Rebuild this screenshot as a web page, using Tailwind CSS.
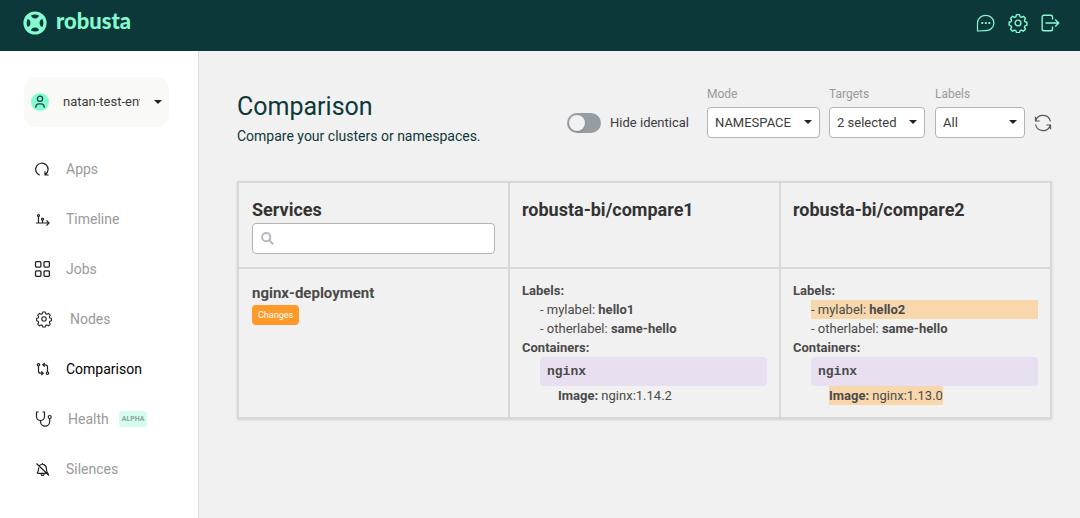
<!DOCTYPE html>
<html lang="en">
<head>
  <meta charset="UTF-8" />
  <meta name="viewport" content="width=device-width, initial-scale=1" />
  <title>Comparison - Robusta</title>
  <script src="https://cdn.jsdelivr.net/npm/@tailwindcss/browser@4"></script>
</head>
<body class="min-h-screen flex flex-col bg-[#f1f1f1] text-[#3b3b3b] font-['Roboto',sans-serif]">

  <header class="h-[51px] shrink-0 bg-[#0d3839] text-[#84fad0] pl-[23px] pr-5 pb-[5px] flex justify-between items-center">
    <a href="#" class="flex items-center gap-[9px]">
      <svg class="size-6" viewBox="0 0 24 24">
        <circle cx="12" cy="12" r="11.600" fill="currentColor" />
        <g fill="#0d3839">
          <path d="M8 4.600Q12 2.600 16 4.600Q15.300 7.400 12 7.400Q8.700 7.400 8 4.600z" />
          <path d="M8 19.400Q12 21.400 16 19.400Q15.300 16.600 12 16.600Q8.700 16.600 8 19.400z" />
          <path d="M4.600 8Q2.600 12 4.600 16Q7.400 15.300 7.400 12Q7.400 8.700 4.600 8z" />
          <path d="M19.400 8Q21.400 12 19.400 16Q16.600 15.300 16.600 12Q16.600 8.700 19.400 8z" />
        </g>
      </svg>
      <span class="font-['Lato',sans-serif] font-black text-[22px] leading-6 pb-1">robusta</span>
    </a>
    <div class="flex items-center gap-3">
      <button aria-label="Chat">
        <svg class="size-5" viewBox="0 0 20 20" fill="none" stroke="currentColor" stroke-width="1.200" stroke-linejoin="round">
          <path d="M1.500 18V10a8.200 7.700 0 1 1 8.200 7.700z" />
          <path d="M5.400 10h1.800M8.900 10h1.800M12.400 10h1.800" stroke-width="1.800" />
        </svg>
      </button>
      <button aria-label="Settings">
        <svg class="size-5" viewBox="0 0 20 20" fill="none" stroke="currentColor" stroke-width="1.400" stroke-linejoin="round">
          <path d="M8.500 1.600h3l.6 2.200 1.300.6 2-1.100 2.100 2.100-1.100 2 .6 1.300 1.900.5v3l-1.900.6-.6 1.300 1.100 2-2.100 2.100-2-1.100-1.300.5-.6 2h-3l-.6-2-1.300-.5-2 1.100-2.100-2.100 1.100-2-.6-1.300-1.900-.6v-3l1.900-.5.6-1.300-1.100-2 2.100-2.100 2 1.100 1.300-.6z" />
          <circle cx="10" cy="10" r="2.900" />
        </svg>
      </button>
      <button aria-label="Log out">
        <svg class="size-5" viewBox="0 0 20 20" fill="none" stroke="currentColor" stroke-width="1.400">
          <path d="M12.500 6.500V4q0-1.800-1.800-1.800H4Q2.200 2.200 2.200 4v12q0 1.800 1.800 1.800h6.700q1.800 0 1.800-1.800v-2.500M5.500 10H18.500M15.200 6.500L18.700 10l-3.500 3.500" />
        </svg>
      </button>
    </div>
  </header>

  <div class="flex grow">
    <aside class="w-[199px] shrink-0 bg-white border-r border-[#dcdcdc]">
      <button class="mt-[26px] ml-6 w-[145px] h-[50px] px-[7px] bg-[#f9faf5] rounded-xl flex items-center text-[13px]">
        <svg class="size-[18px] shrink-0" viewBox="0 0 18 18" fill="none" stroke="#1c4a45" stroke-width="1.300">
          <circle cx="9" cy="9" r="9" fill="#84fad0" stroke="none" />
          <circle cx="9" cy="5.800" r="2.600" />
          <path d="M4.800 14.800v-1a3.200 3.200 0 0 1 3.200-3h2a3.200 3.200 0 0 1 3.200 3v1" />
        </svg>
        <span class="ml-[14px] w-[77px] overflow-hidden whitespace-nowrap text-left">natan-test-env</span>
        <svg class="ml-[14px] w-2 h-1 shrink-0" viewBox="0 0 8 4" fill="#222"><path d="M0 0h8L4 4z" /></svg>
      </button>

      <nav class="mt-[17px] pl-[34px] text-[14px] text-[#9a9a9a]">
        <a href="#" class="h-[50px] flex items-center gap-4">
          <svg class="size-4" viewBox="0 0 16 16" fill="none" stroke="#222" stroke-width="1.200">
            <path d="M5.800 14.200A6.200 6.200 0 1 1 11.500 13.400M11 10.300v3.700h3.700" />
          </svg>
          Apps
        </a>
        <a href="#" class="h-[50px] flex items-center gap-4">
          <svg class="size-4" viewBox="0 0 16 16" fill="none" stroke="#222" stroke-width="1.200">
            <path d="M2 12h13M12.500 9.300L15 12l-2.500 2.700M4.500 12V5.500M8.500 12V9" />
            <circle cx="4.500" cy="4.500" r="1" />
            <circle cx="8.500" cy="8" r="1" />
          </svg>
          Timeline
        </a>
        <a href="#" class="h-[50px] flex items-center gap-4">
          <svg class="size-4" viewBox="0 0 16 16" fill="none" stroke="#222" stroke-width="1.300">
            <rect x="1.500" y=".7" width="5.400" height="5.400" rx="1" />
            <rect x="10" y=".7" width="5.400" height="5.400" rx="1" />
            <rect x="1.500" y="9.900" width="5.400" height="5.400" rx="1" />
            <rect x="10" y="9.900" width="5.400" height="5.400" rx="1" />
          </svg>
          Jobs
        </a>
        <a href="#" class="h-[50px] flex items-center gap-4">
          <svg class="size-5" viewBox="-2 -2 24 24" fill="none" stroke="#222" stroke-width="1.300" stroke-linejoin="round">
            <path d="M8.500 1.600h3l.6 2.200 1.300.6 2-1.100 2.100 2.100-1.100 2 .6 1.300 1.900.5v3l-1.900.6-.6 1.300 1.100 2-2.100 2.100-2-1.100-1.300.5-.6 2h-3l-.6-2-1.300-.5-2 1.100-2.100-2.100 1.100-2-.6-1.300-1.900-.6v-3l1.900-.5.6-1.300-1.100-2 2.100-2.100 2 1.100 1.300-.6z" />
            <circle cx="10" cy="10" r="2.700" />
          </svg>
          Nodes
        </a>
        <a href="#" class="h-[50px] flex items-center gap-4 text-black">
          <svg class="size-4" viewBox="0 0 16 16" fill="none" stroke="#222" stroke-width="1.200">
            <circle cx="4.500" cy="3.800" r="1.200" />
            <circle cx="13.500" cy="12.200" r="1.200" />
            <path d="M4.500 5v5.200q0 2 2 2H9M7.300 10.300l1.900 1.900-1.900 1.900M13.500 11V5.800q0-2-2-2H9M10.700 1.900L8.800 3.800l1.900 1.900" />
          </svg>
          Comparison
        </a>
        <a href="#" class="h-[50px] flex items-center gap-4">
          <svg class="size-[18px]" viewBox="0 0 18 18" fill="none" stroke="#222" stroke-width="1.200">
            <path d="M4.500 2H2.500v4.500a4 4 0 0 0 8 0V2H8.500M6.500 10.500v1a4.600 4.600 0 0 0 9.200 0V8.500" />
            <circle cx="15.700" cy="7" r="1.500" />
          </svg>
          <span class="flex items-center gap-[10px]">Health
            <span class="h-4 px-[3px] rounded bg-[#d4fcef] text-[7px] leading-4 font-bold text-[#8aa79d]">ALPHA</span>
          </span>
        </a>
        <a href="#" class="h-[50px] flex items-center gap-4">
          <svg class="size-4" viewBox="0 0 16 16" fill="none" stroke="#222" stroke-width="1.200">
            <path d="M2.500 2.500l12.500 12M3.500 12.300h10.300q-1.500-1.600-1.500-5A3.900 3.900 0 0 0 5.500 4.600M4.700 6.500q0 4-1.700 5.800M7 13.200a1.700 1.700 0 0 0 3.200 0M8.500 3.400V2" />
          </svg>
          Silences
        </a>
      </nav>
    </aside>

    <main class="grow min-w-0 pl-[38px] pr-7 pt-[35px]">
      <div class="flex justify-between items-start h-[95px]">
        <div class="pt-[5px] text-[#0d3839]">
          <h1 class="text-[25px] leading-8">Comparison</h1>
          <p class="mt-[3px] text-[14px] leading-5">Compare your clusters or namespaces.</p>
        </div>

        <div class="flex items-end text-[13px]">
          <label class="flex items-center gap-[9px] h-[31px] mr-[18px]">
            <input type="checkbox" class="appearance-none w-[34px] h-5 rounded-full bg-[#969da3] p-[2px] before:block before:size-4 before:rounded-full before:bg-[#f1f1f1] before:shadow checked:before:ml-auto" />
            Hide identical
          </label>
          <div class="mr-[9px]">
            <label for="mode" class="block text-[12px] leading-4 mb-[5px] text-[#999]">Mode</label>
            <div class="relative">
              <select id="mode" class="appearance-none w-[113px] h-[31px] pl-[7px] bg-white border border-[#b4b4b4] rounded">
                <option>NAMESPACE</option>
                <option>CLUSTER</option>
              </select>
              <svg class="absolute right-2 top-[13px] w-2 h-1 pointer-events-none" viewBox="0 0 8 4" fill="#222"><path d="M0 0h8L4 4z" /></svg>
            </div>
          </div>
          <div class="mr-[10px]">
            <label for="targets" class="block text-[12px] leading-4 mb-[5px] text-[#999]">Targets</label>
            <div class="relative">
              <select id="targets" class="appearance-none w-24 h-[31px] pl-[7px] bg-white border border-[#b4b4b4] rounded">
                <option>2 selected</option>
              </select>
              <svg class="absolute right-2 top-[13px] w-2 h-1 pointer-events-none" viewBox="0 0 8 4" fill="#222"><path d="M0 0h8L4 4z" /></svg>
            </div>
          </div>
          <div class="mr-[9px]">
            <label for="labels" class="block text-[12px] leading-4 mb-[5px] text-[#999]">Labels</label>
            <div class="relative">
              <select id="labels" class="appearance-none w-[90px] h-[31px] pl-[7px] bg-white border border-[#b4b4b4] rounded">
                <option>All</option>
              </select>
              <svg class="absolute right-2 top-[13px] w-2 h-1 pointer-events-none" viewBox="0 0 8 4" fill="#222"><path d="M0 0h8L4 4z" /></svg>
            </div>
          </div>
          <button aria-label="Refresh" class="h-[31px]">
            <svg class="size-[18px]" viewBox="0 0 18 18" fill="none" stroke="#555" stroke-width="1.200">
              <path d="M1.700 6.800A7.600 7.600 0 0 1 16.400 7.500M1.500 2.800v4.200h4.200M16.300 11.200A7.600 7.600 0 0 1 1.600 10.500M16.500 15.200V11h-4.200" />
            </svg>
          </button>
        </div>
      </div>

      <table class="w-full table-fixed border-collapse border-2 border-[#d8d8d8] shadow-sm text-left text-[#4a4a4a]">
        <thead>
          <tr class="align-top">
            <th class="border-2 border-[#d8d8d8] px-[13px] pt-[15px] pb-[13px] text-[18px] leading-6 text-[#333]">
              <label for="services">Services</label>
              <div class="mt-[1px] h-[31px] px-2 flex items-center gap-2 bg-white border border-[#b4b4b4] rounded">
                <svg class="size-[13px] shrink-0" viewBox="0 0 13 13" fill="none" stroke="#b3b9be" stroke-width="2">
                  <circle cx="5.200" cy="5.200" r="4.100" />
                  <path d="M8.200 8.200l4 4" />
                </svg>
                <input id="services" type="text" class="grow min-w-0 text-[13px] font-normal outline-none" />
              </div>
            </th>
            <th class="border-2 border-[#d8d8d8] px-3 pt-[15px] pb-[13px] text-[18px] leading-6 text-[#333]">robusta-bi/compare1</th>
            <th class="border-2 border-[#d8d8d8] px-3 pt-[15px] pb-[13px] text-[18px] leading-6 text-[#333]">robusta-bi/compare2</th>
          </tr>
        </thead>
        <tbody>
          <tr class="align-top text-[13px] leading-[19px]">
            <td class="border-2 border-[#d8d8d8] px-[13px] py-3">
              <div class="text-[15px] leading-6 font-bold">nginx-deployment</div>
              <span class="block w-fit h-5 px-[6px] bg-[#ff9a2a] rounded text-[9px] leading-5 text-white">Changes</span>
            </td>
            <td class="border-2 border-[#d8d8d8] px-3 py-3">
              <b>Labels:</b>
              <div class="pl-[18px]">
                <div>- mylabel: <b>hello1</b></div>
                <div>- otherlabel: <b>same-hello</b></div>
              </div>
              <b>Containers:</b>
              <div class="pl-[18px]">
                <div class="h-[29px] px-[7px] bg-[#e8dff0] rounded font-['Liberation_Mono',monospace] leading-[29px] font-bold">nginx</div>
                <div class="w-fit ml-[18px]"><b>Image:</b> nginx:1.14.2</div>
              </div>
            </td>
            <td class="border-2 border-[#d8d8d8] px-3 py-3">
              <b>Labels:</b>
              <div class="pl-[18px]">
                <div class="bg-[#f8d7ad]">- mylabel: <b>hello2</b></div>
                <div>- otherlabel: <b>same-hello</b></div>
              </div>
              <b>Containers:</b>
              <div class="pl-[18px]">
                <div class="h-[29px] px-[7px] bg-[#e8dff0] rounded font-['Liberation_Mono',monospace] leading-[29px] font-bold">nginx</div>
                <div class="w-fit ml-[18px] bg-[#f8d7ad]"><b>Image:</b> nginx:1.13.0</div>
              </div>
            </td>
          </tr>
        </tbody>
      </table>
    </main>
  </div>

</body>
</html>
